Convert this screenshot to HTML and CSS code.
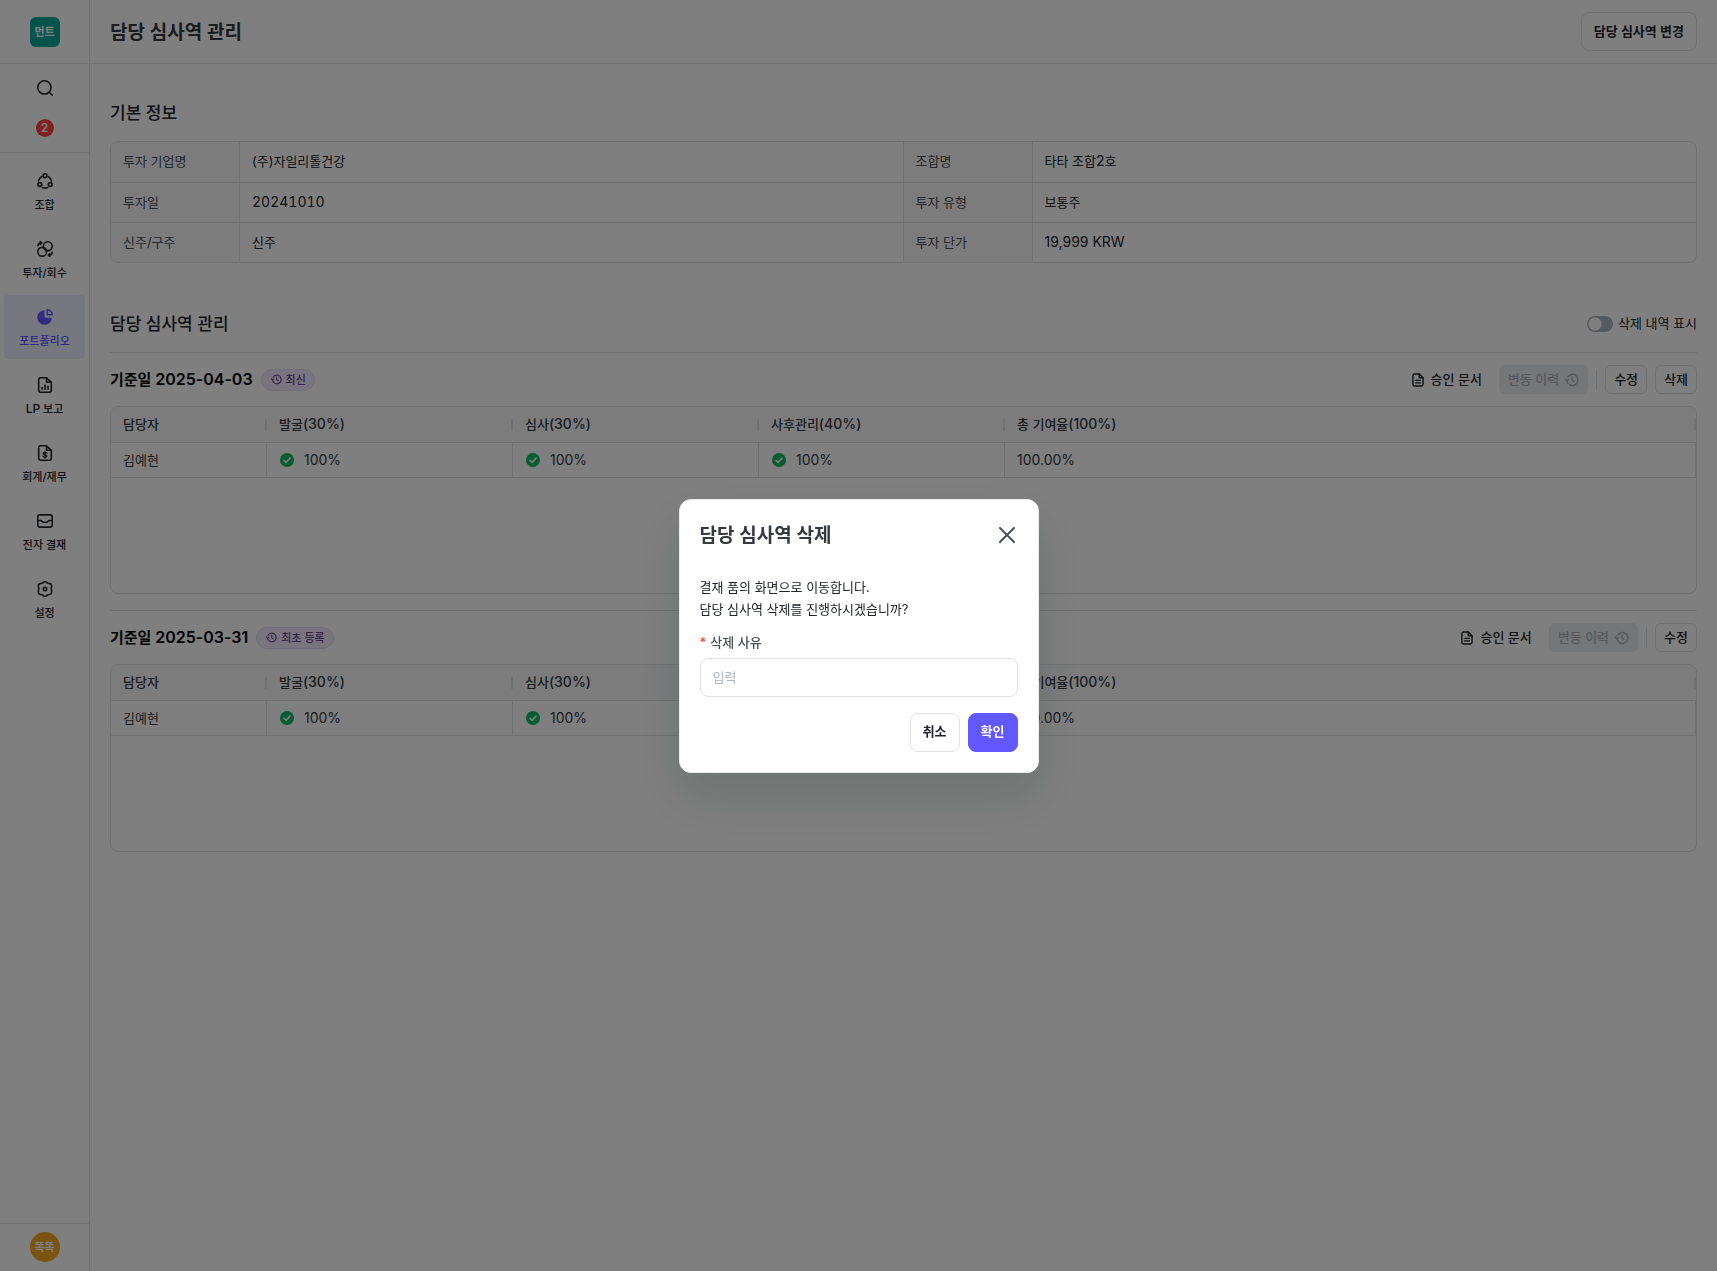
FILE: index.html
```html
<!DOCTYPE html>
<html lang="ko">
<head>
<meta charset="utf-8">
<meta name="viewport" content="width=device-width, initial-scale=1">
<title>담당 심사역 관리</title>
<link rel="stylesheet" href="styles.css">
</head>
<body>
<svg class="sprite" aria-hidden="true">
  <symbol id="i-history" viewBox="0 0 16 16"><path d="M2.200 8.600A6.300 6.300 0 1 0 3 4.800"/><path d="M.6 7.200l1.600 1.700 1.700-1.600M8.200 4.600v3.600l2 1.600"/></symbol>
  <symbol id="i-doc" viewBox="0 0 16 16"><path d="M9.600 1.200H4.200A2 2 0 0 0 2.200 3.200v9.600a2 2 0 0 0 2 2h7.600a2 2 0 0 0 2-2V5.400z"/><path d="M9.500 1.400v4.100h4.100M5.300 8.400h5.400M5.300 11.300h5.400"/></symbol>
  <symbol id="i-check" viewBox="0 0 16 16"><circle class="check-disc" cx="8" cy="8" r="7"/><path class="check-mark" d="M5 8.300l2.200 2L11 6.100"/></symbol>
</svg>

<div class="app">
  <aside class="sidebar">
    <div class="brand"><span class="logo">먼트</span></div>
    <div class="tools">
      <button class="tool" type="button" aria-label="검색"><svg class="icon" viewBox="0 0 16 16"><circle cx="7.400" cy="7.400" r="6.600"/><path d="M12.200 12.200l3.200 3.100"/></svg></button>
      <button class="count" type="button" aria-label="알림 2건">2</button>
    </div>
    <nav class="nav">
      <a class="nav-item" href="#fund"><svg class="icon" viewBox="0 0 16 16"><circle cx="8" cy="2.700" r="1.900"/><circle cx="2.800" cy="11.500" r="1.900"/><circle cx="13.200" cy="11.500" r="1.900"/><path d="M4.500 3.700A6.500 6.500 0 0 0 1.500 8M11.500 3.700A6.500 6.500 0 0 1 14.500 8M5.300 14.500a6.800 6.800 0 0 0 5.400 0"/></svg><span>조합</span></a>
      <a class="nav-item" href="#invest"><svg class="icon" viewBox="0 0 16 16"><circle cx="10.800" cy="5.200" r="4.400"/><circle cx="5.200" cy="10.800" r="4.400"/><path d="M.9 4.800c0-2 1-3 3.500-3M3.300.4l1.400 1.400-1.400 1.500M15.100 11.200c0 2-1 3-3.500 3M12.700 12.700l-1.400 1.500 1.400 1.400"/></svg><span>투자/회수</span></a>
      <a class="nav-item active" href="#portfolio" aria-current="page"><svg class="icon" viewBox="0 0 16 16"><path class="solid" d="M7.400 1.200A7.300 7.300 0 1 0 14.800 9.500c-.2-.6-.6-.8-1.200-.8H9.200A1.700 1.700 0 0 1 7.500 7V2c0-.4 0-.6-.1-.8z"/><path d="M10.300 1.200v4.500h5A4.900 4.900 0 0 0 10.300.8z"/></svg><span>포트폴리오</span></a>
      <a class="nav-item" href="#lp"><svg class="icon" viewBox="0 0 16 16"><path d="M9.500.8H3.600A1.900 1.900 0 0 0 1.700 2.700v10.600a1.900 1.900 0 0 0 1.900 1.900h8.800a1.900 1.900 0 0 0 1.900-1.900V5.300z"/><path d="M9.500 1v4.200h4.500M5 10.500v1.800M8 8v4.300M11 9.300v3"/></svg><span><span class="latin">LP</span> 보고</span></a>
      <a class="nav-item" href="#finance"><svg class="icon" viewBox="0 0 16 16"><path d="M9.500.8H3.600A1.900 1.900 0 0 0 1.700 2.700v10.600a1.900 1.900 0 0 0 1.900 1.900h8.800a1.900 1.900 0 0 0 1.900-1.900V5.300z"/><path d="M9.500 1v4.200h4.500"/><path class="fine" d="M10 8.300C9.600 7.200 6 7 6 8.700c0 1.600 4 .7 4 2.400 0 1.700-3.700 1.500-4.100.2M8 6.500v6.600"/></svg><span>회계/재무</span></a>
      <a class="nav-item" href="#approval"><svg class="icon" viewBox="0 0 16 16"><rect x=".8" y="1.900" width="14.400" height="12.200" rx="2"/><path d="M.8 7.500h3.400c.7 0 .9 1.700 2 1.700h3.600c1.100 0 1.300-1.700 2-1.700h3.400"/></svg><span>전자 결재</span></a>
      <a class="nav-item" href="#settings"><svg class="icon" viewBox="0 0 16 16"><path d="M6.700 1.100a2.300 2.300 0 0 1 2.600 0l1 .8c.6.400 1 .5 1.700.6l1.300.2c.8.2 1.300.8 1.300 1.700v1.300c0 .9-.4 1.400-.4 2.300s.4 1.400.4 2.300v1.300c0 .9-.5 1.500-1.300 1.700l-1.300.2c-.7.1-1.100.2-1.700.6l-1 .8a2.300 2.300 0 0 1-2.600 0l-1-.8c-.6-.4-1-.5-1.700-.6l-1.300-.2c-.8-.2-1.300-.8-1.300-1.700v-1.300c0-.9.4-1.400.4-2.300s-.4-1.400-.4-2.300V4.400c0-.9.5-1.500 1.300-1.700L4 2.500c.7-.1 1.100-.2 1.700-.6z"/><circle cx="8" cy="8" r="1.700"/></svg><span>설정</span></a>
    </nav>
    <div class="account"><button class="avatar" type="button">똑똑</button></div>
  </aside>

  <div class="page">
    <header class="page-head">
      <h1>담당 심사역 관리</h1>
      <button class="btn btn-large" type="button">담당 심사역 변경</button>
    </header>

    <main class="content">
      <section>
        <h2 class="section-title">기본 정보</h2>
        <div class="frame">
          <table class="info">
            <colgroup><col class="col-key"><col><col class="col-key"><col></colgroup>
            <tbody>
              <tr><th scope="row">투자 기업명</th><td>(주)자일리톨건강</td><th scope="row">조합명</th><td>타타 조합<span class="latin">2</span>호</td></tr>
              <tr><th scope="row">투자일</th><td><span class="latin tabular">20241010</span></td><th scope="row">투자 유형</th><td>보통주</td></tr>
              <tr><th scope="row">신주/구주</th><td>신주</td><th scope="row">투자 단가</th><td><span class="latin">19,999 KRW</span></td></tr>
            </tbody>
          </table>
        </div>
      </section>

      <section class="managers">
        <div class="section-head">
          <h2 class="section-title">담당 심사역 관리</h2>
          <label class="switch"><input type="checkbox" role="switch"><span>삭제 내역 표시</span></label>
        </div>

        <article class="record">
          <div class="record-head">
            <h3>기준일 <span class="latin">2025-04-03</span></h3>
            <span class="tag"><svg class="icon"><use href="#i-history"/></svg>최신</span>
            <div class="actions">
              <button class="btn btn-text" type="button"><svg class="icon"><use href="#i-doc"/></svg><span>승인 문서</span></button>
              <button class="btn" type="button" disabled><span>변동 이력</span><svg class="icon"><use href="#i-history"/></svg></button>
              <span class="rule"></span>
              <button class="btn" type="button"><span>수정</span></button>
              <button class="btn" type="button"><span>삭제</span></button>
            </div>
          </div>
          <div class="frame grid">
            <table class="share">
              <colgroup><col class="col-name"><col class="col-part"><col class="col-part"><col class="col-part"><col></colgroup>
              <thead><tr><th scope="col">담당자</th><th scope="col">발굴<span class="latin">(30%)</span></th><th scope="col">심사<span class="latin">(30%)</span></th><th scope="col">사후관리<span class="latin">(40%)</span></th><th scope="col">총 기여율<span class="latin">(100%)</span></th></tr></thead>
              <tbody><tr>
                <td>김예현</td>
                <td><span class="rate"><svg class="icon"><use href="#i-check"/></svg>100%</span></td>
                <td><span class="rate"><svg class="icon"><use href="#i-check"/></svg>100%</span></td>
                <td><span class="rate"><svg class="icon"><use href="#i-check"/></svg>100%</span></td>
                <td><span class="latin">100.00%</span></td>
              </tr></tbody>
            </table>
          </div>
        </article>

        <article class="record">
          <div class="record-head">
            <h3>기준일 <span class="latin">2025-03-31</span></h3>
            <span class="tag"><svg class="icon"><use href="#i-history"/></svg>최초 등록</span>
            <div class="actions">
              <button class="btn btn-text" type="button"><svg class="icon"><use href="#i-doc"/></svg><span>승인 문서</span></button>
              <button class="btn" type="button" disabled><span>변동 이력</span><svg class="icon"><use href="#i-history"/></svg></button>
              <span class="rule"></span>
              <button class="btn" type="button"><span>수정</span></button>
            </div>
          </div>
          <div class="frame grid">
            <table class="share">
              <colgroup><col class="col-name"><col class="col-part"><col class="col-part"><col class="col-part"><col></colgroup>
              <thead><tr><th scope="col">담당자</th><th scope="col">발굴<span class="latin">(30%)</span></th><th scope="col">심사<span class="latin">(30%)</span></th><th scope="col">사후관리<span class="latin">(40%)</span></th><th scope="col">총 기여율<span class="latin">(100%)</span></th></tr></thead>
              <tbody><tr>
                <td>김예현</td>
                <td><span class="rate"><svg class="icon"><use href="#i-check"/></svg>100%</span></td>
                <td><span class="rate"><svg class="icon"><use href="#i-check"/></svg>100%</span></td>
                <td><span class="rate"><svg class="icon"><use href="#i-check"/></svg>100%</span></td>
                <td><span class="latin">100.00%</span></td>
              </tr></tbody>
            </table>
          </div>
        </article>
      </section>
    </main>
  </div>
</div>

<div class="overlay">
  <dialog class="modal" open aria-labelledby="modal-title">
    <form method="dialog">
      <div class="modal-head">
        <h2 id="modal-title">담당 심사역 삭제</h2>
        <button class="close" type="button" aria-label="닫기"><svg class="icon" viewBox="0 0 16 16"><path d="M1 1l14 14M15 1L1 15"/></svg></button>
      </div>
      <p class="message">결재 품의 화면으로 이동합니다.<br>담당 심사역 삭제를 진행하시겠습니까?</p>
      <label class="field-label" for="reason"><span class="required">*</span>삭제 사유</label>
      <input class="field" id="reason" type="text" placeholder="입력">
      <div class="modal-actions">
        <button class="btn btn-large" type="button">취소</button>
        <button class="btn btn-large btn-primary" type="button">확인</button>
      </div>
    </form>
  </dialog>
</div>
</body>
</html>
```
FILE: styles.css
```css
* { box-sizing: border-box; }

:root {
  --line: #e1e2e6;
  --text: #212429;
  --muted: #495057;
  --primary: #6358ff;
}

body {
  margin: 0;
  background: #fff;
  color: var(--text);
  font: 400 13px/20px Inter, "Noto Sans CJK KR", sans-serif;
}

h1, h2, h3, p { margin: 0; }
a { color: inherit; text-decoration: none; }
button, input { margin: 0; font: inherit; color: inherit; }
button { padding: 0; border: 0; background: none; }

.sprite { display: none; }

.icon {
  flex: none;
  width: 16px;
  height: 16px;
  fill: none;
  stroke: currentColor;
  stroke-width: 1.6;
  stroke-linecap: round;
  stroke-linejoin: round;
}
.fine { stroke-width: 1.2; }

/* Latin letters and digits run one size above the Hangul */
.latin { font-size: 14px; }
.tabular { font-variant-numeric: tabular-nums; }

.app { display: flex; min-height: 100vh; }

/* Sidebar */
.sidebar {
  display: flex;
  flex: none;
  flex-direction: column;
  width: 90px;
  border-right: 1px solid var(--line);
}

.brand {
  display: flex;
  align-items: center;
  justify-content: center;
  height: 64px;
  border-bottom: 1px solid var(--line);
}

.logo, .avatar {
  display: flex;
  align-items: center;
  justify-content: center;
  width: 30px;
  height: 30px;
  font-size: 11px;
  font-weight: 600;
  color: #fff;
}
.logo { border-radius: 6px; background: #00a896; }
.avatar { border-radius: 50%; background: #f5a623; }

.tools {
  display: flex;
  flex-direction: column;
  align-items: center;
  gap: 23px;
  padding: 16px 0 15px;
  border-bottom: 1px solid var(--line);
}
.tool { display: flex; }
.count {
  width: 18px;
  height: 18px;
  border-radius: 50%;
  background: #ff4245;
  color: #fff;
  font-size: 12px;
  font-weight: 600;
  line-height: 18px;
}

.nav {
  display: flex;
  flex: 1;
  flex-direction: column;
  gap: 4px;
  padding: 6px 4px;
}
.nav-item {
  display: flex;
  flex-direction: column;
  align-items: center;
  gap: 7px;
  height: 64px;
  padding-top: 14px;
  border-radius: 4px;
  font-size: 11px;
  font-weight: 500;
  line-height: 18px;
}
.nav-item .latin { font-size: 12px; }
.nav-item.active { background: #efeeff; color: var(--primary); }
.solid { fill: currentColor; stroke: none; }

.account {
  display: flex;
  justify-content: center;
  padding: 8px 0 9px;
  border-top: 1px solid var(--line);
}

/* Page */
.page { flex: 1; min-width: 0; }
.page-head {
  display: flex;
  align-items: center;
  justify-content: space-between;
  height: 64px;
  padding: 0 20px;
  border-bottom: 1px solid var(--line);
}
h1 { padding-top: 2px; font-size: 19px; font-weight: 600; line-height: 28px; color: #343a40; }

.content { padding: 36px 20px; }
.section-title { font-size: 17px; font-weight: 500; line-height: 26px; }
.section-title + .frame { margin-top: 15px; }

.frame {
  overflow: hidden;
  border: 1px solid var(--line);
  border-radius: 8px;
}

table { width: 100%; border-spacing: 0; table-layout: fixed; }
th, td { padding: 0 12px; text-align: left; }

.info th, .info td { height: 40px; padding-bottom: 2px; border-bottom: 1px solid var(--line); }
.info tr:first-child > * { height: 41px; }
.info tr:last-child > * { height: 39px; border-bottom: 0; }
.info th, .info td:not(:last-child) { border-right: 1px solid var(--line); }
.info th { background: #f8f9fa; color: var(--muted); font-weight: 400; }
.col-key { width: 129px; }

.managers { margin-top: 48px; }
.section-head { display: flex; align-items: center; justify-content: space-between; padding-bottom: 15px; }

.switch { display: flex; align-items: center; gap: 5px; }
.switch span { padding-bottom: 2px; }
.switch input {
  width: 26px;
  height: 16px;
  border-radius: 8px;
  appearance: none;
  background: radial-gradient(circle at 8px 8px, #fff 6px, #adb2ba 7px);
}

.record { border-top: 1px solid var(--line); }
.record + .record { margin-top: 16px; }
.record-head { display: flex; align-items: center; gap: 8px; padding: 12px 0; }
h3 { font-size: 15px; font-weight: 600; line-height: 24px; color: #000; }
h3 .latin { font-size: 16px; }

.tag {
  display: flex;
  align-items: center;
  gap: 4px;
  height: 22px;
  padding: 0 8px 0 9px;
  border: 1px solid #e4daf4;
  border-radius: 11px;
  background: #f1ebfc;
  color: #6a4594;
  font-size: 11px;
  font-weight: 500;
}
.tag .icon { width: 11px; height: 11px; }

.actions { display: flex; align-items: center; gap: 8px; margin-left: auto; }
.rule { width: 1px; height: 20px; background: var(--line); }

.btn {
  display: flex;
  align-items: center;
  gap: 6px;
  height: 29px;
  padding: 0 8px;
  border: 1px solid var(--line);
  border-radius: 6px;
  background: #fff;
  font-weight: 500;
}
.btn span { padding-bottom: 2px; }
.btn .icon { width: 14px; height: 14px; }
.btn-text { border-color: transparent; }
.btn:disabled { border-color: #e9ecef; background: #e9ecef; color: #adb2ba; }
.btn-large { height: 39px; padding: 0 12px 2px; border-radius: 8px; font-weight: 600; }
.btn-primary { border-color: var(--primary); background: var(--primary); color: #fff; }

.grid { min-height: 188px; }
.col-name { width: 156px; }
.col-part { width: 246px; }
.share th {
  height: 36px;
  padding-bottom: 2px;
  border-bottom: 1px solid var(--line);
  background: linear-gradient(var(--line), var(--line)) right center / 2px 12px no-repeat #f8f9fa;
  color: #343a40;
  font-weight: 500;
}
.share td {
  height: 35px;
  border-right: 1px solid var(--line);
  border-bottom: 1px solid var(--line);
  color: #343a40;
}
.rate { display: flex; align-items: center; gap: 9px; font-size: 14px; }
.rate .icon { width: 16px; height: 16px; }
.check-disc { fill: #12b76a; stroke: none; }
.check-mark { stroke: #fff; }

/* Modal */
.overlay {
  position: fixed;
  inset: 0;
  display: flex;
  align-items: center;
  justify-content: center;
  background: rgba(0, 0, 0, .5);
}
.modal {
  position: static;
  width: 360px;
  margin: 0;
  padding: 20px;
  border: 1px solid #e9ecef;
  border-radius: 12px;
  background: #fff;
  color: var(--text);
  box-shadow: 0 24px 48px rgba(16, 40, 30, .14);
}
.modal-head { display: flex; align-items: center; justify-content: space-between; }
.modal-head h2 { padding-top: 2px; font-size: 19px; font-weight: 600; line-height: 28px; color: #343a40; }
.close { display: flex; padding: 3px; color: var(--muted); }
.close .icon { stroke-width: 2; }
.message { margin-top: 26px; line-height: 22px; }
.field-label {
  display: flex;
  gap: 4px;
  margin-top: 12px;
  color: var(--muted);
  font-weight: 500;
}
.required { color: #f03e2e; }
.field {
  width: 100%;
  height: 39px;
  margin-top: 6px;
  padding: 0 12px;
  border: 1px solid #dee0e6;
  border-radius: 8px;
  background: #fff;
}
.field::placeholder { color: #adb5bd; opacity: 1; }
.modal-actions { display: flex; justify-content: flex-end; gap: 8px; margin-top: 16px; }
```
